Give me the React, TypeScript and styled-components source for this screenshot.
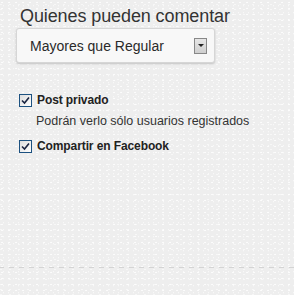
import React from "react";
import styled, { createGlobalStyle } from "styled-components";

const Global = createGlobalStyle`
  html, body { margin: 0; padding: 0; }
  body {
    width: 294px;
    height: 295px;
    overflow: hidden;
    background-color: #eeeeee;
    background-image:
      radial-gradient(circle at 30% 40%, rgba(255,255,255,0.8) 0.6px, transparent 1px),
      radial-gradient(circle at 70% 80%, rgba(255,255,255,0.6) 0.6px, transparent 1px),
      radial-gradient(circle at 10% 90%, rgba(255,255,255,0.5) 0.6px, transparent 1px);
    background-size: 7px 6px, 5px 7px, 9px 5px;
    font-family: Arial, "Liberation Sans", sans-serif;
  }
`;

const Panel = styled.div`
  height: 295px;
  display: flex;
  flex-direction: column;
  padding: 0 0 0 16px;
  box-sizing: border-box;
`;

const Title = styled.div`
  font-size: 18px;
  color: #333;
  margin: 5px 0 0 4px;
  line-height: 22px;
  letter-spacing: -0.1px;
`;

const SelectBox = styled.div`
  margin-top: 1px;
  width: 199px;
  height: 35px;
  box-sizing: border-box;
  border: 1px solid #d6d6d6;
  border-radius: 3px;
  background: #f8f8f8;
  box-shadow: 0 1px 2px rgba(0,0,0,0.18);
  display: flex;
  align-items: center;
  justify-content: space-between;
  padding: 0 7px 0 13px;
`;

const SelectText = styled.span`
  font-size: 14px;
  color: #2a2a2a;
`;

const Arrow = styled.span`
  width: 13px;
  height: 16px;
  box-sizing: border-box;
  border: 1px solid #888;
  background: linear-gradient(#e6e6e6, #cfcfcf);
  display: flex;
  align-items: center;
  justify-content: center;
`;

const Options = styled.div`
  margin-top: 29px;
  margin-left: 3px;
  display: flex;
  flex-direction: column;
`;

const OptionRow = styled.div<{ $gap?: number }>`
  display: flex;
  align-items: center;
  gap: 5px;
  height: 16px;
  margin-top: ${(p) => p.$gap ?? 0}px;
`;

const Box = styled.span`
  width: 13px;
  height: 13px;
  box-sizing: border-box;
  border: 1px solid #1c5180;
  background: linear-gradient(135deg, #dcdcdc, #fff);
  display: flex;
  align-items: center;
  justify-content: center;
`;

const Label = styled.span`
  font-size: 12px;
  font-weight: bold;
  color: #222;
  letter-spacing: -0.1px;
`;

const Hint = styled.div`
  font-size: 12.5px;
  color: #333;
  margin: 6px 0 0 17px;
  line-height: 15px;
`;

const Dashed = styled.div`
  margin-top: auto;
  margin-bottom: 27px;
  margin-left: -16px;
  height: 1px;
  background-image: linear-gradient(to right, #d4d4d4 5px, transparent 5px);
  background-size: 10px 1px;
  background-position: -1px 0;
`;

const Check = () => (
  <svg width="9" height="9" viewBox="0 0 9 9">
    <path d="M1 4.5 L3.5 7 L8 1.5" stroke="#1a2440" strokeWidth="1.6" fill="none" />
  </svg>
);

export default function App() {
  return (
    <>
      <Global />
      <Panel>
        <Title>Quienes pueden comentar</Title>
        <SelectBox>
          <SelectText>Mayores que Regular</SelectText>
          <Arrow>
            <svg width="6" height="4" viewBox="0 0 6 4">
              <path d="M0 0 H6 L3 3 Z" fill="#222" />
            </svg>
          </Arrow>
        </SelectBox>
        <Options>
          <OptionRow>
            <Box><Check /></Box>
            <Label>Post privado</Label>
          </OptionRow>
          <Hint>Podrán verlo sólo usuarios registrados</Hint>
          <OptionRow $gap={9}>
            <Box><Check /></Box>
            <Label>Compartir en Facebook</Label>
          </OptionRow>
        </Options>
        <Dashed />
      </Panel>
    </>
  );
}
